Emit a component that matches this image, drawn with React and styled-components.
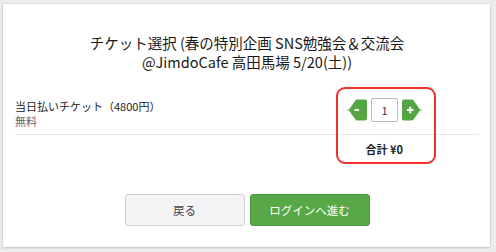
import React from 'react'
import styled, { createGlobalStyle } from 'styled-components'

const Global = createGlobalStyle`
  html, body {
    margin: 0;
    padding: 0;
    background: #ececec;
    font-family: "Noto Sans CJK JP", "Noto Sans", sans-serif;
    color: #222;
  }
`

const Page = styled.div`
  padding: 4px 6px 5px 3px;
  height: 252px;
  box-sizing: border-box;
`

const Card = styled.div`
  position: relative;
  background: #fff;
  height: 243px;
  box-sizing: border-box;
  padding: 29px 11px 0 12px;
  box-shadow: 0 0 2px rgba(0, 0, 0, 0.18), 0 1px 2px rgba(0, 0, 0, 0.12);
`

const Title = styled.h1`
  margin: 0;
  text-align: center;
  font-size: 14.5px;
  font-weight: 400;
  line-height: 19px;
  color: #1a1a1a;
`

const TicketRow = styled.div`
  display: flex;
  justify-content: space-between;
  align-items: flex-start;
  margin-top: 23px;
  padding-bottom: 5px;
  border-bottom: 1px solid #e8e8e8;
`

const TicketInfo = styled.div`
  font-size: 11px;
  line-height: 15px;
  padding-top: 5px;
`

const Price = styled.div`
  color: #666;
`

const Stepper = styled.div`
  display: flex;
  align-items: center;
  gap: 4px;
  margin: 4px 57px 0 0;
`

const Count = styled.div`
  width: 25px;
  height: 22px;
  border: 1px solid #bbb;
  border-radius: 2px;
  display: flex;
  align-items: center;
  justify-content: center;
  font-size: 11px;
  color: #333;
`

const TotalRow = styled.div`
  display: flex;
  justify-content: flex-end;
  padding: 7px 76px 0 0;
  font-size: 11px;
  font-weight: 700;
  line-height: 14px;
`

const Actions = styled.div`
  display: flex;
  justify-content: center;
  gap: 5px;
  margin-top: 38px;
`

const Button = styled.button`
  width: 120px;
  height: 32px;
  border-radius: 3px;
  font-family: inherit;
  font-size: 11.5px;
  border: 1px solid ${p => (p.primary ? '#4b9a3b' : '#cfcfd4')};
  background: ${p => (p.primary ? '#58a847' : '#f4f4f6')};
  color: ${p => (p.primary ? '#fff' : '#444')};
`

const Highlight = styled.div`
  position: absolute;
  left: 333px;
  top: 83px;
  width: 100px;
  height: 77px;
  box-sizing: border-box;
  border: 2px solid #f0302a;
  border-radius: 9px;
  pointer-events: none;
`

const Arrow = ({ dir }) => (
  <svg width="20" height="22" viewBox="0 0 20 22">
    <g transform={dir === 'right' ? 'matrix(-1 0 0 1 20 0)' : undefined}>
      <path
        d="M0.8 12.2 L8.4 1.4 Q9 0.6 10 0.6 H18 Q20 0.6 20 2.6 V19.4 Q20 21.4 18 21.4 H10 Q9 21.4 8.4 20.6 L0.8 9.8 Q0 11 0.8 12.2 Z"
        fill="#55a545"
      />
    </g>
    {dir === 'right' ? (
      <g fill="#fff">
        <rect x="5" y="10" width="6.5" height="2" />
        <rect x="7.25" y="7.75" width="2" height="6.5" />
      </g>
    ) : (
      <rect x="7.5" y="10" width="4.5" height="2" fill="#fff" />
    )}
  </svg>
)

export default function App() {
  return (
    <Page>
      <Global />
      <Card>
        <Title>
          チケット選択 (春の特別企画 SNS勉強会＆交流会
          <br />
          @JimdoCafe 高田馬場 5/20(土))
        </Title>
        <TicketRow>
          <TicketInfo>
            <div>当日払いチケット（4800円）</div>
            <Price>無料</Price>
          </TicketInfo>
          <Stepper>
            <Arrow dir="left" />
            <Count>1</Count>
            <Arrow dir="right" />
          </Stepper>
        </TicketRow>
        <TotalRow>合計 ¥0</TotalRow>
        <Actions>
          <Button>戻る</Button>
          <Button primary>ログインへ進む</Button>
        </Actions>
        <Highlight />
      </Card>
    </Page>
  )
}
